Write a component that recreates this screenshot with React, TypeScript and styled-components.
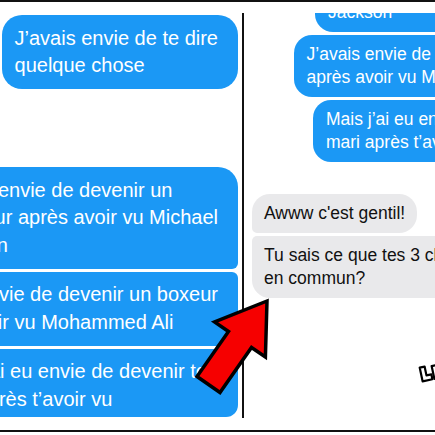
import styled, { createGlobalStyle } from 'styled-components';

const BLUE = '#1b98f5';
const GRAY = '#e9e9eb';

const GlobalStyle = createGlobalStyle`
  html, body { margin: 0; padding: 0; background: #fff; }
  body { font-family: "Liberation Sans", Arial, sans-serif; }
`;

const Frame = styled.div`
  position: relative;
  width: 435px;
  height: 435px;
  box-sizing: border-box;
  overflow: hidden;
  background: #fff;
  border-top: 2px solid #111;
  padding-bottom: 3px;
  display: flex;
`;

const Columns = styled.div`
  flex: 1;
  display: flex;
  border-bottom: 2px solid #111;
`;

const LeftPane = styled.div`
  width: 242px;
  flex-shrink: 0;
  overflow: hidden;
`;

const Divider = styled.div`
  width: 2px;
  flex-shrink: 0;
  background: #111;
  margin: 11px 0 12px;
`;

const RightPane = styled.div`
  flex: 1;
  min-width: 0;
  overflow: hidden;
  margin-top: 11px;
`;

const LeftThread = styled.div`
  display: flex;
  flex-direction: column;
  align-items: flex-end;
  padding: 13px 4px 0 0;
`;

const RightThread = styled.div`
  width: 350px;
  margin-top: -66px;
  display: flex;
  flex-direction: column;
  align-items: flex-end;
`;

const BigBubble = styled.div<{ $gap?: number; $tr?: number; $br?: number; $pb?: number }>`
  margin-top: ${(p) => p.$gap ?? 0}px;
  background: ${BLUE};
  color: #fff;
  font-size: 20px;
  line-height: 27.5px;
  white-space: nowrap;
  padding: 9.5px 20px ${(p) => p.$pb ?? 9.5}px 13px;
  border-radius: 20px ${(p) => p.$tr ?? 20}px ${(p) => p.$br ?? 20}px 20px;
`;

const SmallBubble = styled.div<{ $gray?: boolean; $gap?: number; $tl?: number; $bl?: number }>`
  margin-top: ${(p) => p.$gap ?? 0}px;
  align-self: ${(p) => (p.$gray ? 'flex-start' : 'flex-end')};
  margin-left: ${(p) => (p.$gray ? 8 : 0)}px;
  background: ${(p) => (p.$gray ? GRAY : BLUE)};
  color: ${(p) => (p.$gray ? '#111' : '#fff')};
  font-size: 17.5px;
  line-height: 23px;
  white-space: nowrap;
  padding: ${(p) => (p.$gray ? '8px 12px' : '8px 18px 8px 13px')};
  border-radius: ${(p) => p.$tl ?? 18}px 18px 18px ${(p) => p.$bl ?? 18}px;
`;

const Arrow = styled.svg`
  position: absolute;
  left: 185px;
  top: 290px;
  width: 95px;
  height: 115px;
  overflow: visible;
`;

const Mark = styled.svg`
  position: absolute;
  left: 417px;
  top: 360px;
  width: 22px;
  height: 22px;
  overflow: visible;
`;

export default function App() {
  return (
    <>
      <GlobalStyle />
      <Frame>
        <Columns>
          <LeftPane>
            <LeftThread>
              <BigBubble>
                J’avais envie de te dire
                <br />
                quelque chose
              </BigBubble>
              <BigBubble $gap={78} $br={6}>
                J’ai eu envie de devenir un
                <br />
                chanteur après avoir vu Michael
                <br />
                Jackson
              </BigBubble>
              <BigBubble $gap={3} $tr={6} $br={6}>
                J’avais envie de devenir un boxeur
                <br />
                après avoir vu Mohammed Ali
              </BigBubble>
              <BigBubble $gap={3} $tr={6} $br={12} $pb={4}>
                Mais j’ai eu envie de devenir ton
                <br />
                mari après t’avoir vu
              </BigBubble>
            </LeftThread>
          </LeftPane>
          <Divider />
          <RightPane>
            <RightThread>
              <SmallBubble>
                J’ai eu envie de devenir un
                <br />
                chanteur après avoir vu Michael
                <br />
                Jackson
              </SmallBubble>
              <SmallBubble $gap={3}>
                J’avais envie de devenir un boxeur
                <br />
                après avoir vu Mohammed Ali
              </SmallBubble>
              <SmallBubble $gap={3}>
                Mais j’ai eu envie de devenir ton
                <br />
                mari après t’avoir vu
              </SmallBubble>
              <SmallBubble $gray $gap={32} $bl={5}>
                Awww c'est gentil!
              </SmallBubble>
              <SmallBubble $gray $gap={3} $tl={5}>
                Tu sais ce que tes 3 choix ont
                <br />
                en commun?
              </SmallBubble>
            </RightThread>
          </RightPane>
        </Columns>
        <Arrow viewBox="0 0 95 115">
          <polygon
            points="82,9 80.4,65 66.5,55.5 35,100.5 12,84.5 43.5,39.5 29.6,30"
            fill="#f60000"
            stroke="#000"
            strokeWidth="3.5"
            strokeLinejoin="miter"
          />
        </Arrow>
        <Mark viewBox="0 0 22 22">
          <g transform="rotate(-12 11 11)" fill="#fff" stroke="#000" strokeWidth="2.2" strokeLinejoin="round">
            <path d="M4 4 L9 4 L9 13 L14 13 L14 18 L4 18 Z" />
            <path d="M16 5 L22 5 L22 18 L16 18 Z" />
          </g>
        </Mark>
      </Frame>
    </>
  );
}
